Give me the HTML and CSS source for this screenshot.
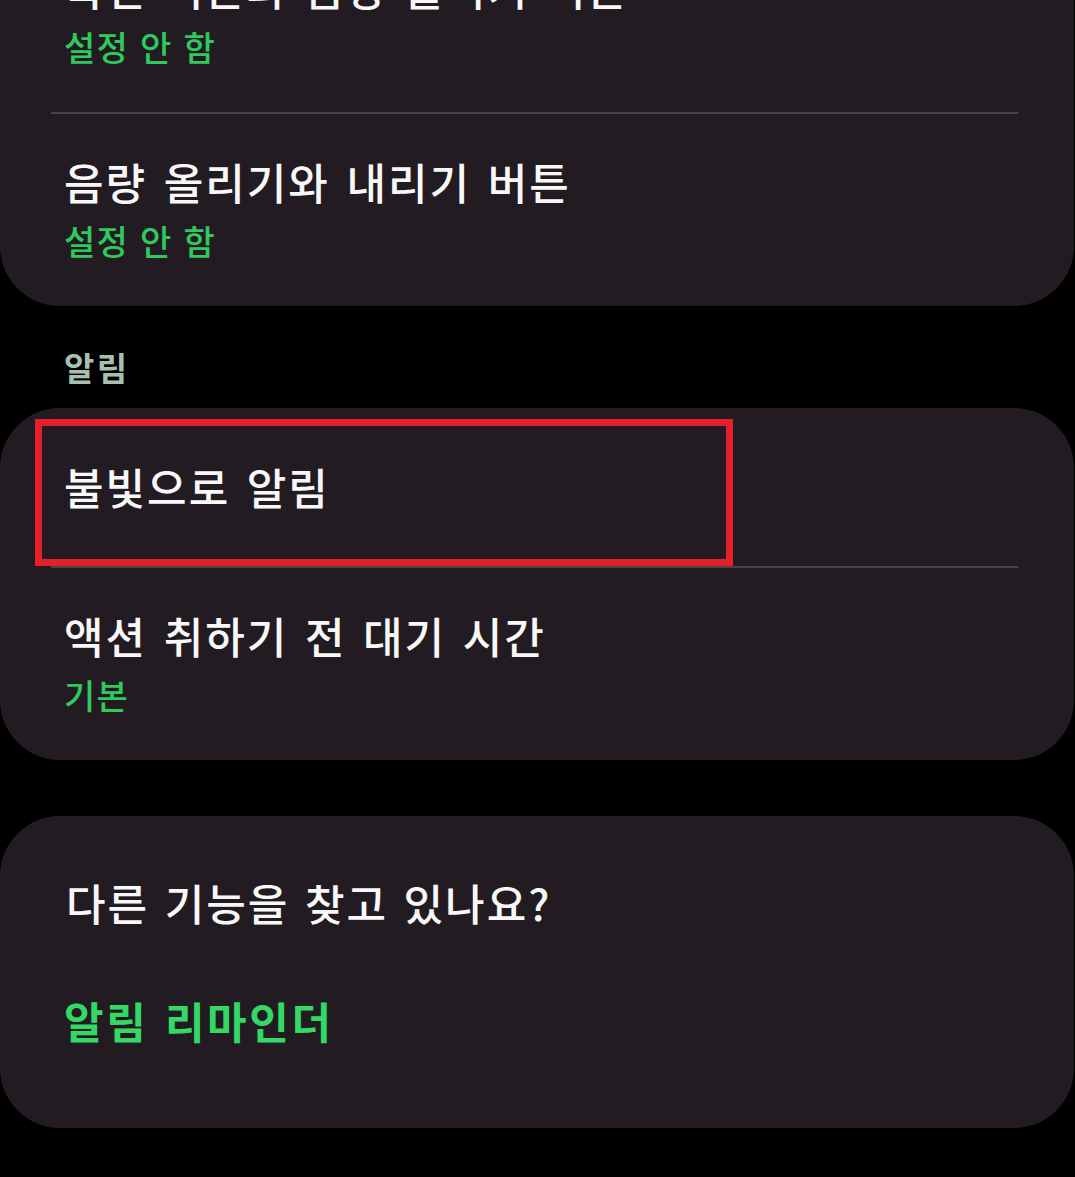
FILE: index.html
```html
<!DOCTYPE html>
<html lang="ko">
<head>
<meta charset="utf-8">
<title>설정</title>
<link rel="stylesheet" href="styles.css">
</head>
<body>
<main class="page">
  <section class="card card-first">
    <div class="item">
      <div class="item-title">측면 버튼과 음량 올리기 버튼</div>
      <div class="item-sub">설정 안 함</div>
    </div>
    <div class="divider"></div>
    <div class="item">
      <div class="item-title">음량 올리기와 내리기 버튼</div>
      <div class="item-sub">설정 안 함</div>
    </div>
  </section>

  <h2 class="section-header">알림</h2>

  <section class="card">
    <div class="item item-single item-marked">
      <div class="item-title">불빛으로 알림</div>
    </div>
    <div class="divider"></div>
    <div class="item">
      <div class="item-title">액션 취하기 전 대기 시간</div>
      <div class="item-sub">기본</div>
    </div>
  </section>

  <section class="card card-suggest">
    <div class="suggest-title">다른 기능을 찾고 있나요?</div>
    <div class="suggest-link">알림 리마인더</div>
  </section>
</main>
</body>
</html>
```

FILE: styles.css
```css
html, body {
  margin: 0;
  padding: 0;
  background: #000;
}

body {
  font-family: "Noto Sans CJK KR", "Noto Sans", sans-serif;
  color: #f7f7f7;
  overflow: hidden;
}

.page {
  display: flex;
  flex-direction: column;
  width: 1074px;
}

.card {
  background: #221c22;
  border-radius: 60px;
  display: flex;
  flex-direction: column;
}

.card-first {
  margin-top: -80px;
}

.item {
  padding: 39px 64px 43px 64px;
  display: flex;
  flex-direction: column;
  gap: 10px;
}

.item-single {
  padding: 50px 64px 52px 64px;
}

.item-marked {
  position: relative;
}

.item-marked::after {
  content: "";
  position: absolute;
  top: 11px;
  left: 35px;
  width: 698px;
  height: 147px;
  box-sizing: border-box;
  border: 7px solid #e3202a;
  z-index: 2;
}

.item-title {
  font-size: 43px;
  line-height: 56px;
  font-weight: 500;
  letter-spacing: 2px;
  word-spacing: 2.5px;
  color: #f7f7f7;
  white-space: nowrap;
}

.item-sub {
  font-size: 34px;
  line-height: 44px;
  font-weight: 500;
  letter-spacing: 1.3px;
  color: #2fc95d;
  white-space: nowrap;
}

.divider {
  height: 2px;
  background: #48424a;
  margin: 0 56px 0 51px;
}

.section-header {
  margin: 0;
  padding: 39px 64px 19px 64px;
  font-size: 33px;
  line-height: 44px;
  font-weight: 700;
  letter-spacing: 2.5px;
  color: #a7bfae;
}

.card-suggest {
  margin-top: 56px;
  padding: 58px 64px 80px 66px;
  gap: 62px;
}

.suggest-title {
  font-size: 43px;
  line-height: 56px;
  font-weight: 500;
  letter-spacing: 2px;
  word-spacing: 1.5px;
  color: #f7f7f7;
  white-space: nowrap;
}

.suggest-link {
  font-size: 43px;
  line-height: 56px;
  font-weight: 700;
  letter-spacing: 2.6px;
  word-spacing: 2px;
  color: #34d965;
  margin-left: -2px;
  white-space: nowrap;
}
```
